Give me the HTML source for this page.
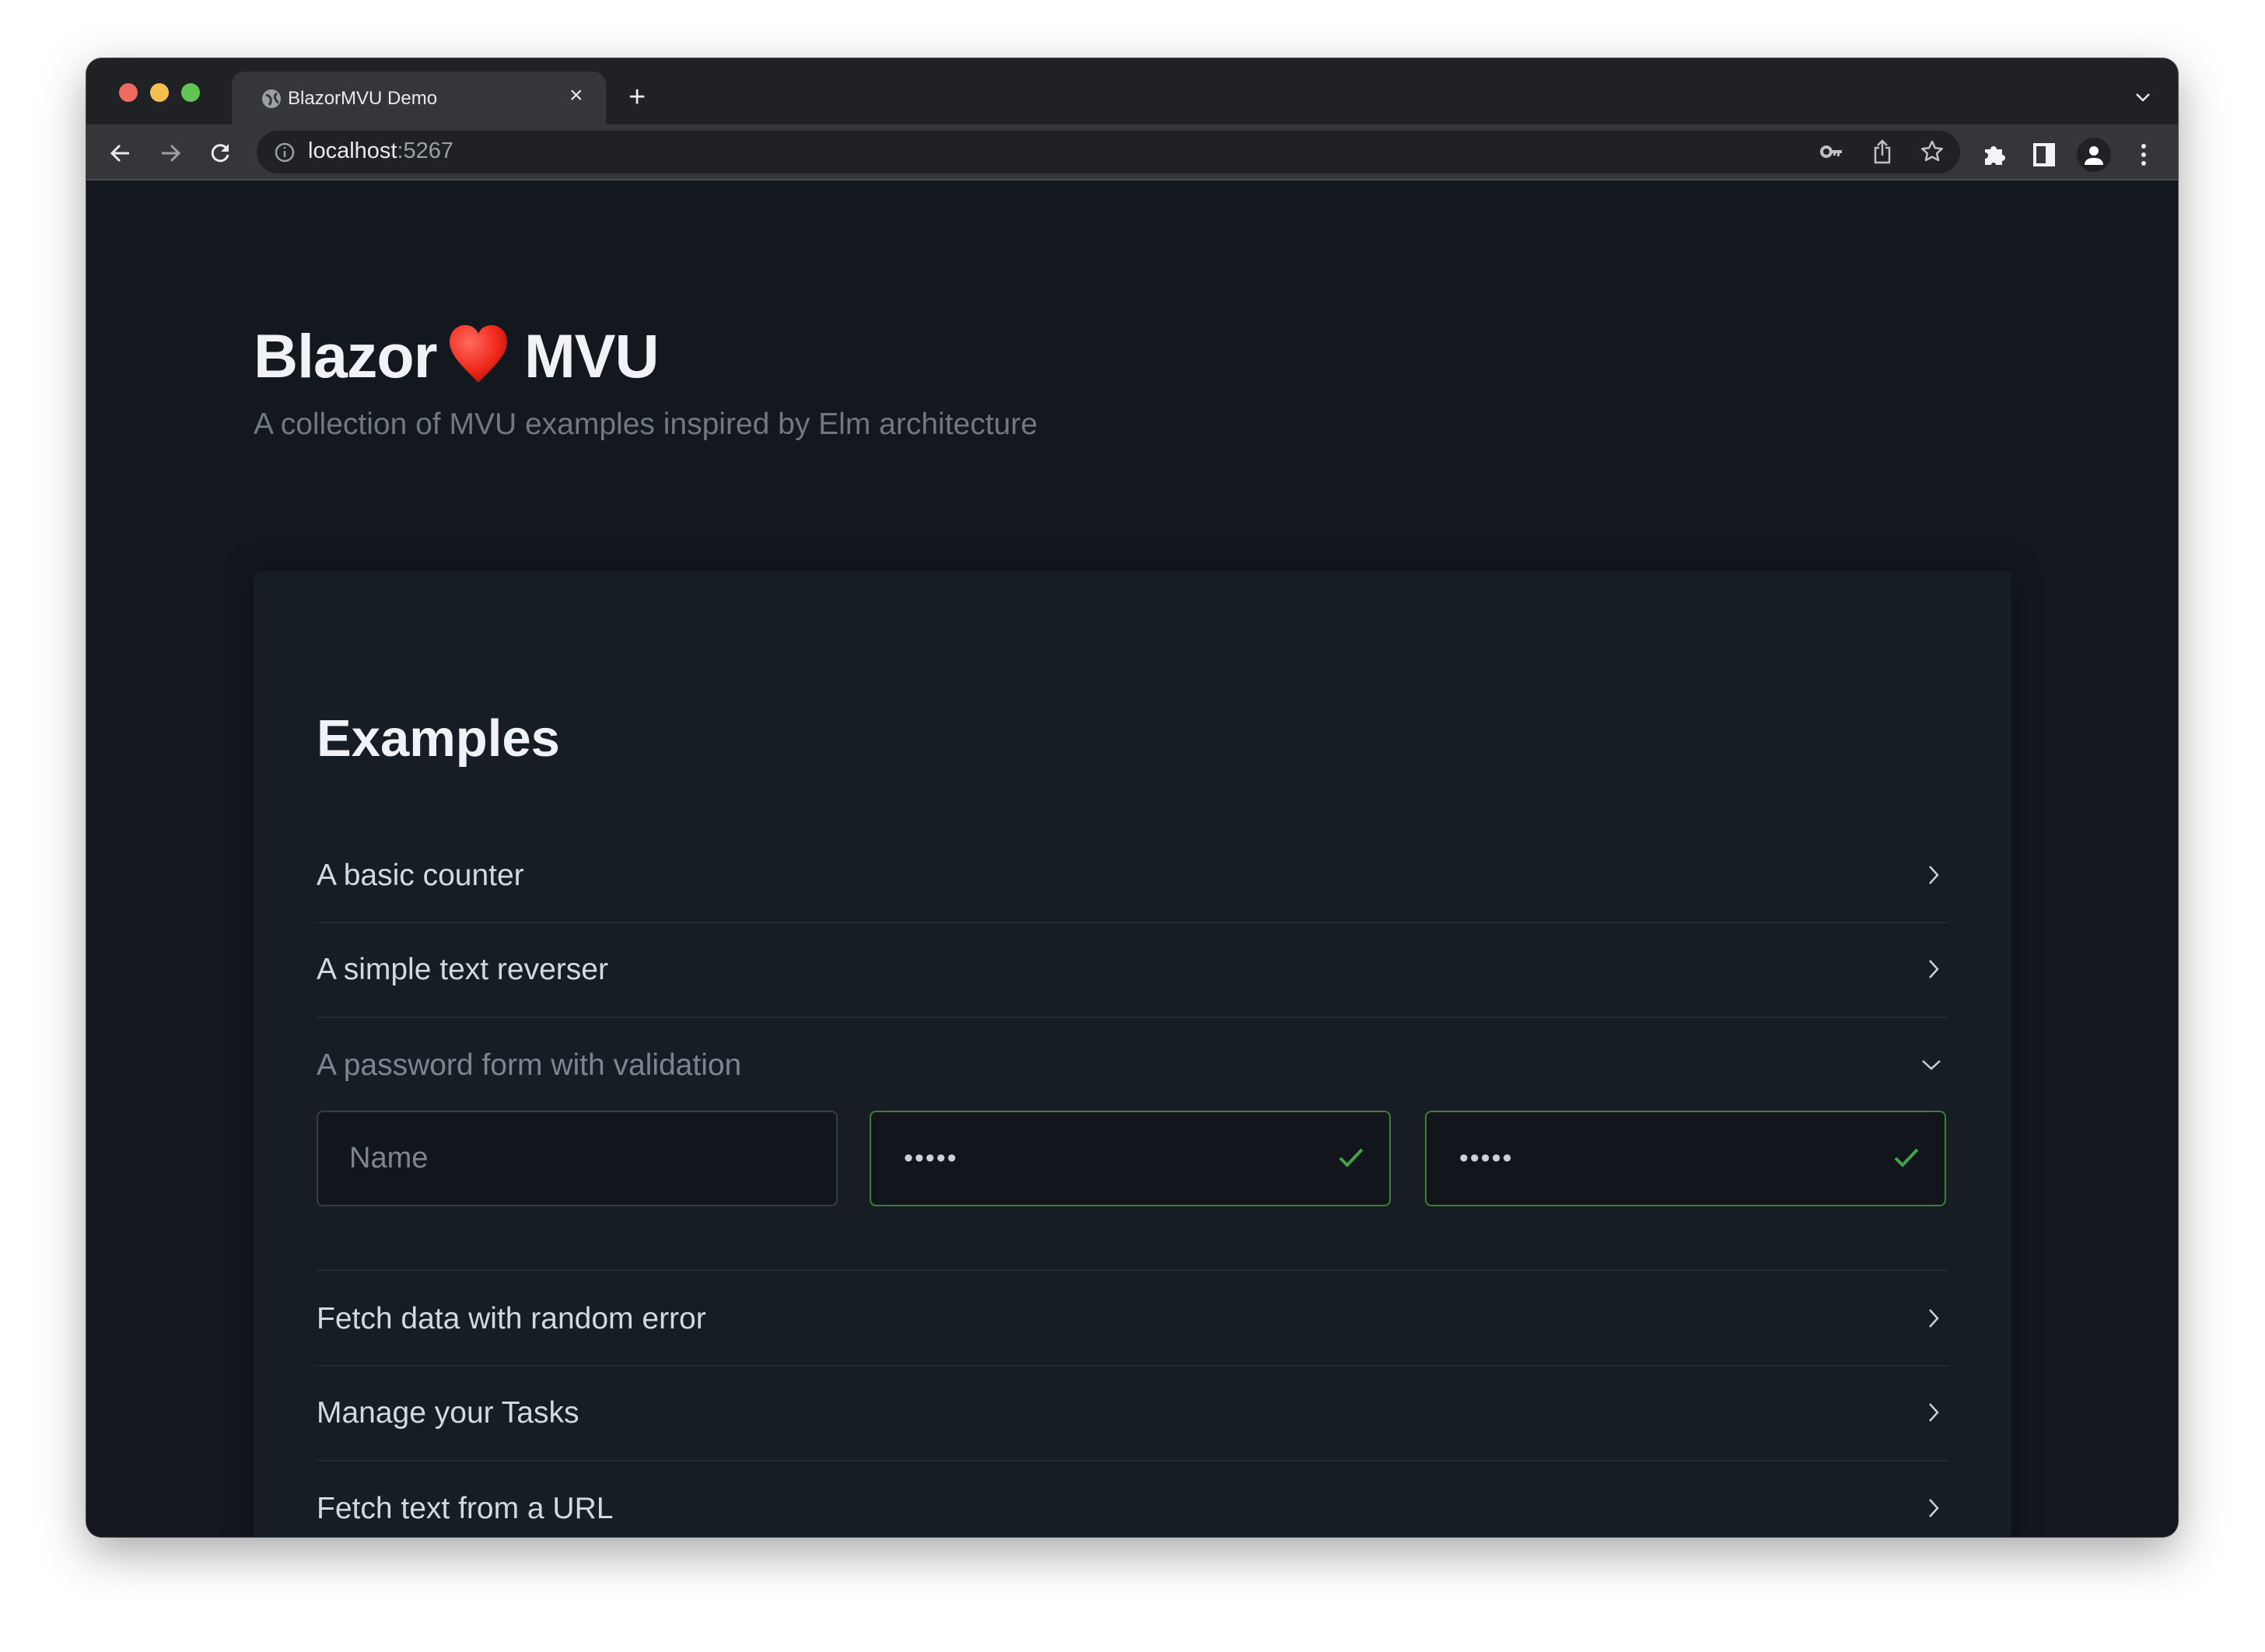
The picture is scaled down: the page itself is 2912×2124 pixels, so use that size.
<!DOCTYPE html>
<html><head><meta charset="utf-8"><style>
*{margin:0;padding:0;box-sizing:border-box}
html,body{width:2912px;height:2124px;background:#fff;overflow:hidden;font-family:"Liberation Sans",sans-serif}
.win{position:absolute;left:111px;top:75px;width:2689px;height:1901px;border-radius:20px;overflow:hidden;background:#13181f;box-shadow:0 20px 60px rgba(0,0,0,.35),0 0 0 1px #555}
.tabbar{position:absolute;left:0;top:0;width:100%;height:85px;background:#202124}
.toolbar{position:absolute;left:0;top:85px;width:100%;height:72px;background:#35363a;border-bottom:2px solid #4a4b4f}
.dot{position:absolute;top:32px;width:24px;height:24px;border-radius:50%}
.tab{position:absolute;left:187px;top:17px;width:481px;height:68px;background:#35363a;border-radius:16px 16px 0 0}
.abs{position:absolute}
.omni{position:absolute;left:219px;top:8px;width:2190px;height:55px;border-radius:28px;background:#202124}
.content{position:absolute;left:0;top:159px;width:100%;bottom:0;background:#13181f}
.card{position:absolute;left:215px;top:500px;width:2260px;height:1400px;background:#161d24;border-radius:8px;box-shadow:0 0 40px rgba(0,0,0,.35)}
.item{position:absolute;left:81px;width:2098px;font-size:39px;color:#d3d9e0}
.sep{position:absolute;left:81px;width:2098px;height:2px;background:#222b34}
.chev{position:absolute;left:2152px}
.inp{position:absolute;top:694px;width:670px;height:123px;border:2px solid #363d46;border-radius:8px;background:#12161c}
.inp.ok{border-color:#3f7e34}
</style></head><body>
<div class="win">
 <div class="tabbar">
  <div class="dot" style="left:42px;background:#ed6a5e"></div>
  <div class="dot" style="left:82px;background:#f5bf4f"></div>
  <div class="dot" style="left:122px;background:#61c554"></div>
  <div class="tab">
   <svg class="abs" style="left:38px;top:22px" width="26" height="26" viewBox="0 0 26 26"><circle cx="13" cy="13" r="12" fill="#9aa0a6"/><path d="M6 8q5 1 6 5t-2 8M20 6q-4 3-2 7t4 5" stroke="#35363a" stroke-width="3" fill="none"/></svg>
   <div class="abs" style="left:72px;top:21px;font-size:24px;color:#e8eaed">BlazorMVU Demo</div>
   <div class="abs" style="left:434px;top:14px;font-size:30px;color:#e8eaed">×</div>
  </div>
  <div class="abs" style="left:697px;top:31px;font-size:38px;color:#e8eaed;line-height:38px">+</div>
  <svg class="abs" style="left:2634px;top:43px" width="20" height="14" viewBox="0 0 20 14"><path d="M2 3l8 8 8-8" stroke="#e8eaed" stroke-width="2.5" fill="none"/></svg>
 </div>
 <div class="toolbar">
  <svg class="abs" style="left:30px;top:23px" width="28" height="28" viewBox="0 0 28 28"><path d="M25 14H4M13 4L3 14l10 10" stroke="#e8eaed" stroke-width="3" fill="none"/></svg>
  <svg class="abs" style="left:94px;top:23px" width="28" height="28" viewBox="0 0 28 28"><path d="M3 14h21M15 4l10 10-10 10" stroke="#9aa0a6" stroke-width="3" fill="none"/></svg>
  <svg class="abs" style="left:158px;top:23px" width="28" height="28" viewBox="0 0 28 28"><path d="M23 9A10 10 0 1 0 24 16" stroke="#e8eaed" stroke-width="3" fill="none"/><path d="M25 2v10H15z" fill="#e8eaed"/></svg>
  <div class="omni">
   <svg class="abs" style="left:22px;top:14px" width="28" height="28" viewBox="0 0 28 28"><circle cx="14" cy="14" r="11" stroke="#9aa0a6" stroke-width="2.5" fill="none"/><path d="M14 12v8M14 7v2" stroke="#9aa0a6" stroke-width="2.5"/></svg>
   <div class="abs" style="left:66px;top:10px;font-size:29px;color:#e8eaed">localhost<span style="color:#9aa0a6">:5267</span></div>
   <svg class="abs" style="left:2010px;top:16px" width="30" height="22" viewBox="0 0 30 22"><circle cx="8" cy="11" r="6" stroke="#bdc1c6" stroke-width="4" fill="none"/><path d="M14 9h14v4h-3v4h-3v-4h-2v3h-3v-3h-3z" fill="#bdc1c6"/></svg>
   <svg class="abs" style="left:2077px;top:10px" width="26" height="34" viewBox="0 0 26 34"><path d="M9 12H4v19h18V12h-5M13 22V3M7 9l6-6 6 6" stroke="#bdc1c6" stroke-width="2.5" fill="none"/></svg>
   <svg class="abs" style="left:2138px;top:11px" width="32" height="32" viewBox="0 0 32 32"><path d="M16 3l3.8 8.2 9 1-6.7 6 1.9 8.8L16 22.6 8 27l1.9-8.8-6.7-6 9-1z" stroke="#bdc1c6" stroke-width="2.5" fill="none" stroke-linejoin="round"/></svg>
  </div>
  <svg class="abs" style="left:2437px;top:22px" width="32" height="32" viewBox="0 0 32 32"><path d="M4 10h7a4 4 0 1 1 8 0h7v7a4 4 0 1 1 0 8v5h-8a3 3 0 1 0-6 0H4v-8a4 4 0 1 0 0-8z" fill="#f1f3f4"/></svg>
  <div class="abs" style="left:2503px;top:24px;width:28px;height:30px;border:4px solid #f1f3f4;border-right-width:12px"></div>
  <div class="abs" style="left:2559px;top:17px;width:44px;height:44px;border-radius:50%;background:#202124">
   <svg class="abs" style="left:8px;top:8px" width="28" height="28" viewBox="0 0 28 28"><circle cx="14" cy="9" r="6" fill="#fff"/><path d="M2 27c0-7 6-9 12-9s12 2 12 9z" fill="#fff"/></svg>
  </div>
  <svg class="abs" style="left:2639px;top:23px" width="12" height="34" viewBox="0 0 12 34"><circle cx="6" cy="5" r="3" fill="#e8eaed"/><circle cx="6" cy="16" r="3" fill="#e8eaed"/><circle cx="6" cy="27" r="3" fill="#e8eaed"/></svg>
 </div>
 <div class="content">
  <div class="abs" style="left:215px;top:184px;font-size:79px;font-weight:bold;color:#f0f2f5;letter-spacing:-1px;line-height:1">Blazor</div>
  <svg class="abs" style="left:465px;top:183px" width="78" height="76" viewBox="0 0 78 76"><defs><radialGradient id="h" cx=".35" cy=".3" r=".8"><stop offset="0" stop-color="#ff6a5e"/><stop offset=".6" stop-color="#f0291c"/><stop offset="1" stop-color="#b0100a"/></radialGradient></defs><path d="M39 75C20 55 2 40 2 22 2 10 11 1 22 1c8 0 14 4 17 11C42 5 48 1 56 1c11 0 20 9 20 21 0 18-18 33-37 53z" fill="url(#h)"/></svg>
  <div class="abs" style="left:563px;top:184px;font-size:79px;font-weight:bold;color:#f0f2f5;letter-spacing:-1px;line-height:1">MVU</div>
  <div class="abs" style="left:215px;top:289px;font-size:39px;color:#6f7883;line-height:1.2">A collection of MVU examples inspired by Elm architecture</div>
  <div class="card">
   <div class="abs" style="left:81px;top:176px;font-size:67px;font-weight:bold;color:#f0f2f5;line-height:1.2">Examples</div>
   <div class="item" style="top:370px">A basic counter</div>
   <div class="sep" style="top:451px"></div>
   <div class="item" style="top:491px">A simple text reverser</div>
   <div class="sep" style="top:573px"></div>
   <div class="item" style="top:614px;color:#7d8690">A password form with validation</div>
   <div class="inp" style="left:81px"><div class="abs" style="left:40px;top:38px;font-size:38px;color:#7d8690">Name</div></div>
   <div class="inp ok" style="left:792px"><div class="abs" style="left:42px;top:40px;font-size:34px;color:#c9d1d9;letter-spacing:2px">•••••</div>
    <svg class="abs" style="left:600px;top:44px" width="34" height="28" viewBox="0 0 34 28"><path d="M3 15l9 9L31 4" stroke="#3fa34d" stroke-width="4" fill="none"/></svg></div>
   <div class="inp ok" style="left:1506px"><div class="abs" style="left:42px;top:40px;font-size:34px;color:#c9d1d9;letter-spacing:2px">•••••</div>
    <svg class="abs" style="left:600px;top:44px" width="34" height="28" viewBox="0 0 34 28"><path d="M3 15l9 9L31 4" stroke="#3fa34d" stroke-width="4" fill="none"/></svg></div>
   <div class="sep" style="top:898px"></div>
   <div class="item" style="top:940px">Fetch data with random error</div>
   <div class="sep" style="top:1021px"></div>
   <div class="item" style="top:1061px">Manage your Tasks</div>
   <div class="sep" style="top:1143px"></div>
   <div class="item" style="top:1184px">Fetch text from a URL</div>
   <svg class="chev" style="top:377px" width="16" height="28" viewBox="0 0 16 28"><path d="M3 3l10 11-10 11" stroke="#c9d1d9" stroke-width="2.5" fill="none"/></svg>
   <svg class="chev" style="top:498px" width="16" height="28" viewBox="0 0 16 28"><path d="M3 3l10 11-10 11" stroke="#c9d1d9" stroke-width="2.5" fill="none"/></svg>
   <svg class="chev" style="left:2143px;top:627px" width="28" height="16" viewBox="0 0 28 16"><path d="M3 3l11 10 11-10" stroke="#c9d1d9" stroke-width="2.5" fill="none"/></svg>
   <svg class="chev" style="top:947px" width="16" height="28" viewBox="0 0 16 28"><path d="M3 3l10 11-10 11" stroke="#c9d1d9" stroke-width="2.5" fill="none"/></svg>
   <svg class="chev" style="top:1068px" width="16" height="28" viewBox="0 0 16 28"><path d="M3 3l10 11-10 11" stroke="#c9d1d9" stroke-width="2.5" fill="none"/></svg>
   <svg class="chev" style="top:1191px" width="16" height="28" viewBox="0 0 16 28"><path d="M3 3l10 11-10 11" stroke="#c9d1d9" stroke-width="2.5" fill="none"/></svg>
  </div>
 </div>
</div>
</body></html>
